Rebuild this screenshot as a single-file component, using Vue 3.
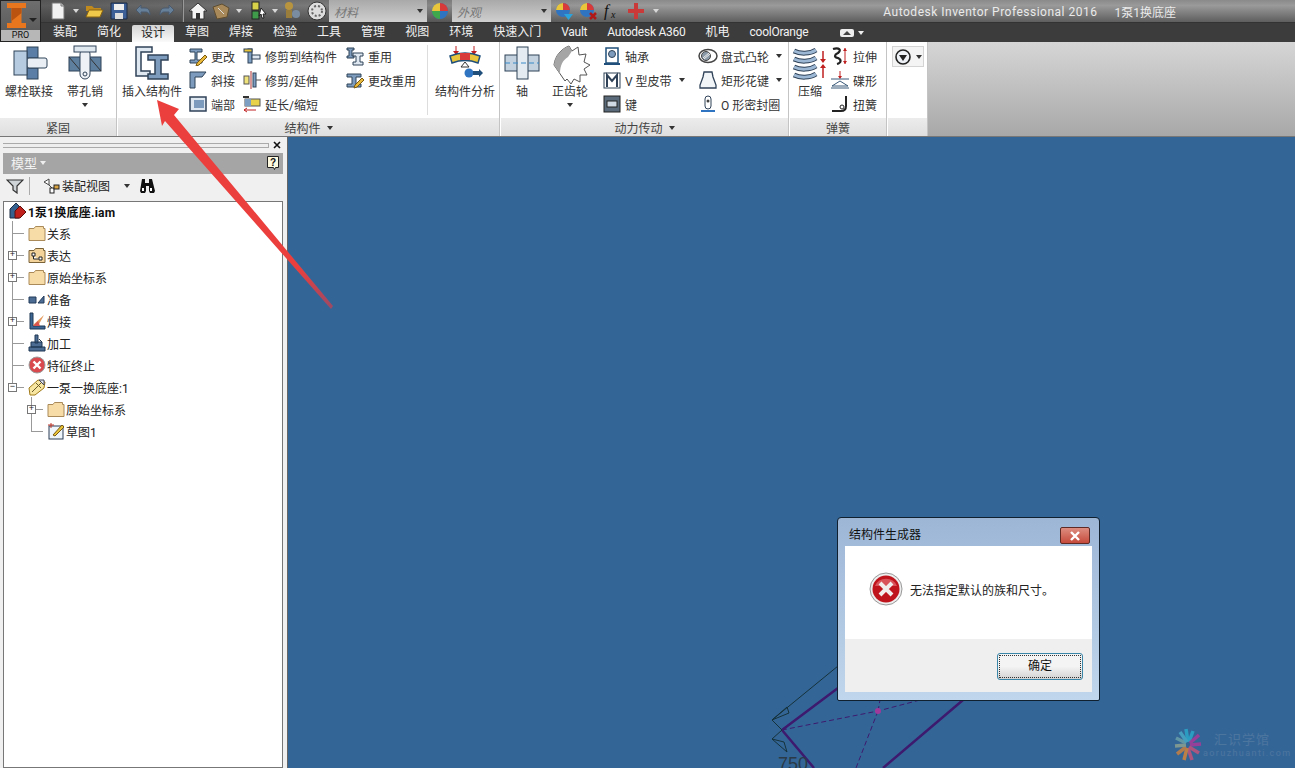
<template>
  <div class="app">
    <header class="head">
      <div class="logo">
        <svg width="19" height="25" viewBox="0 0 19 25">
          <path d="M0 0h19v5h-4.500v15H19v5H0v-5h4.500V5H0z" fill="#e8761e" />
          <path d="M4.500 5h10v5l-10 8z" fill="#b9530f" />
        </svg>
        <i class="caret logo-caret"></i>
        <span class="pro">PRO</span>
      </div>
      <div class="head-right">
        <div class="titlebar">
          <div class="qat">
            <span v-for="(q, i) in quick" :key="i" class="qat-item" :style="{ width: q.w + 'px' }">
              <i v-if="q.caret" class="caret small-caret"></i>
              <i v-else-if="q.sep" class="qat-sep"></i>
              <span v-else-if="q.combo" class="combo" :style="{ width: q.w + 'px' }">
                <em>{{ q.combo }}</em><i class="caret small-caret dark"></i>
              </span>
              <svg v-else width="20" height="20" viewBox="0 0 20 20" v-html="icons[q.icon]"></svg>
            </span>
          </div>
          <div class="title">
            <span class="title-app">Autodesk Inventor Professional 2016</span>
            <span>1泵1换底座</span>
          </div>
        </div>
        <nav class="tabs">
          <span
            v-for="t in tabs"
            :key="t"
            class="tab"
            :class="{ active: t === '设计', latin: /^[a-zA-Z0-9 ]+$/.test(t) }"
          >{{ t }}</span>
          <span class="tab-extra">
            <svg width="14" height="10" viewBox="0 0 14 10">
              <rect x="0" y="1" width="14" height="8" rx="2" fill="#eee" />
              <path d="M3 7l4-4 4 4z" fill="#444" />
            </svg>
            <i class="caret small-caret light"></i>
          </span>
        </nav>
      </div>
    </header>

    <section class="ribbon">
      <div v-for="p in panels" :key="p.title" class="panel" :style="{ width: p.w + 'px' }">
        <div class="panel-body" :style="{ paddingLeft: p.pad + 'px' }">
          <template v-for="(it, i) in p.items" :key="i">
            <div v-if="it.big" class="big" :style="{ width: it.w + 'px', marginLeft: (it.ml || 0) + 'px' }">
              <svg width="40" height="40" viewBox="0 0 40 40" v-html="icons[it.icon]"></svg>
              <span class="big-label">{{ it.big }}</span>
              <i v-if="it.caret" class="caret small-caret dark big-caret"></i>
            </div>
            <i v-else-if="it.sep" class="panel-sep" :style="{ marginRight: it.mr + 'px' }"></i>
            <div v-else class="small-col" :style="{ width: it.w + 'px', marginLeft: (it.ml || 0) + 'px' }">
              <div v-for="r in it.rows" :key="r.text" class="small">
                <svg class="small-icon" width="20" height="20" viewBox="0 0 20 20" v-html="icons[r.icon]"></svg>
                <span>{{ r.text }}</span>
                <i v-if="r.caret" class="caret small-caret dark small-drop"></i>
              </div>
            </div>
          </template>
          <div v-if="p.view" class="view-btn">
            <svg width="18" height="18" viewBox="0 0 18 18">
              <circle cx="9" cy="9" r="7" fill="#eef2f6" stroke="#222" stroke-width="1.6" />
              <path d="M5 7h8l-4 6z" fill="#222" />
            </svg>
            <i class="caret small-caret dark"></i>
          </div>
        </div>
        <div class="panel-foot">
          {{ p.title }}<i v-if="p.caret" class="caret small-caret dark foot-caret"></i>
        </div>
      </div>
      <div class="ribbon-fill"></div>
    </section>

    <main class="main">
      <aside class="browser">
        <div class="grip">
          <i></i>
          <svg width="8" height="8" viewBox="0 0 8 8"><path d="M1 1l6 6M7 1L1 7" stroke="#111" stroke-width="1.6" /></svg>
        </div>
        <div class="browser-head">
          <span>模型</span><i class="caret small-caret light"></i>
          <svg class="help" width="14" height="16" viewBox="0 0 14 16">
            <path d="M1.500 1.500h11v11h-3l-1 2-1-2h-6z" fill="#fffbe0" stroke="#222" />
            <text x="7" y="11" font-size="10" font-weight="700" text-anchor="middle" font-family="Liberation Sans, sans-serif" fill="#111">?</text>
          </svg>
        </div>
        <div class="browser-tools">
          <svg width="18" height="16" viewBox="0 0 18 16">
            <path d="M1 2h16l-6 6v7l-4-3V8z" fill="#cfd4d8" stroke="#333" stroke-width="1.200" />
          </svg>
          <i class="tool-sep"></i>
          <svg width="20" height="18" viewBox="0 0 20 18">
            <path d="M3 5l5-3v6zM8 8l3 3" stroke="#444" fill="#fff" />
            <rect x="9" y="11" width="4" height="5" fill="#fff" stroke="#222" />
            <rect x="13" y="8" width="5" height="4" fill="#d9a441" stroke="#222" />
          </svg>
          <span class="tool-label">装配视图</span>
          <i class="caret small-caret dark tool-caret"></i>
          <svg class="binoc" width="16" height="14" viewBox="0 0 16 14">
            <path d="M3 0h3v4h4V0h3l3 12-1 2h-4l-1-2V7H7v5l-1 2H2l-1-2z" fill="#111" />
            <rect x="3" y="9" width="2" height="3" fill="#fff" />
            <rect x="11" y="9" width="2" height="3" fill="#fff" />
          </svg>
        </div>
        <div class="tree">
          <div class="tree-root">
            <svg width="18" height="18" viewBox="0 0 18 18">
              <path d="M1 7l6-6 3 3v12H1z" fill="#36618f" stroke="#1c2d44" />
              <path d="M6 9l5-5 6 6-6 6H6z" fill="#c0201c" stroke="#5a0f0c" />
            </svg>
            <b>1泵1换底座.iam</b>
          </div>
          <div v-for="(n, i) in tree" :key="i" class="row" :class="{ nested: n.level === 2 }">
            <i class="line-v" :class="{ last: n.lastV }"></i>
            <i class="line-h"></i>
            <i v-if="n.level === 2" class="line-down" :class="{ last: n.lastV }"></i>
            <i v-if="n.toggle" class="toggle">{{ n.toggle }}</i>
            <svg width="18" height="18" viewBox="0 0 18 18" v-html="icons[n.icon]"></svg>
            <span>{{ n.text }}</span>
          </div>
        </div>
      </aside>

      <div class="viewport">
        <svg class="sketch" width="1008" height="631" viewBox="287 137 1008 631">
          <g stroke="#3d1a6e" stroke-width="2.500" fill="none">
            <path d="M782 730L838 688M782 730L814 768M963 700L883 768" />
          </g>
          <g stroke="#3d1a6e" stroke-width="1" stroke-dasharray="5 3" fill="none">
            <path d="M782 730L878 711L920 700M878 711L856 768M878 711L880 700" />
          </g>
          <circle cx="878" cy="711" r="3" fill="#a03a9a" />
          <g stroke="#15323a" stroke-width="1" fill="none">
            <path d="M838 666L772 720L787 707L789 713L772 720M782 730L772 720M782 730L772 739L787 752L784 742L772 739" />
          </g>
          <text x="778" y="770" font-size="18" fill="#2a3a46" font-family="Liberation Sans, sans-serif">750</text>
        </svg>

        <div class="dialog">
          <div class="dialog-title">
            <span>结构件生成器</span>
            <button class="dialog-close">
              <svg width="12" height="10" viewBox="0 0 12 10"><path d="M2 1l8 8M10 1L2 9" stroke="#fff" stroke-width="2.400" /></svg>
            </button>
          </div>
          <div class="dialog-body">
            <svg width="34" height="34" viewBox="0 0 34 34">
              <circle cx="17" cy="17" r="16" fill="#eee" stroke="#999" />
              <circle cx="17" cy="17" r="13.500" fill="#c0141c" />
              <path d="M6 14a12 12 0 0 1 22 0z" fill="#d9545a" />
              <path d="M11 11l12 12M23 11L11 23" stroke="#f1eded" stroke-width="4" />
            </svg>
            <span>无法指定默认的族和尺寸。</span>
          </div>
          <div class="dialog-foot">
            <button class="ok"><span>确定</span></button>
          </div>
        </div>

        <div class="watermark">
          <svg width="28" height="34" viewBox="0 0 28 34">
            <g stroke-width="3.500" fill="none" opacity=".85">
              <path d="M14 14L12 1" stroke="#2aa7c9" />
              <path d="M15 14L19 3" stroke="#2aa7c9" />
              <path d="M16 15L25 7" stroke="#a83a9a" />
              <path d="M16 17L27 16" stroke="#a83a9a" />
              <path d="M15 19L25 25" stroke="#c2537a" />
              <path d="M14 20L18 32" stroke="#c2537a" />
              <path d="M13 20L10 32" stroke="#d7843a" />
              <path d="M12 19L3 26" stroke="#c9803f" />
              <path d="M12 17L1 18" stroke="#8ba08f" />
              <path d="M12 15L2 10" stroke="#6aa0a8" />
              <path d="M13 14L6 4" stroke="#4aa9c6" />
            </g>
          </svg>
          <div>
            <p class="wm-cn">汇识学馆</p>
            <p class="wm-en">aoruzhuanti.com</p>
          </div>
        </div>
      </div>
    </main>

    <svg class="arrow" width="200" height="220" viewBox="140 95 200 220">
      <defs>
        <linearGradient id="arrowFill" x1="0" y1="0" x2="1" y2="1">
          <stop offset="0.8" stop-color="#ea3f3d" />
          <stop offset="1" stop-color="#9a4a66" />
        </linearGradient>
      </defs>
      <path d="M157 100L179 109L174 115L333 306L331 309L165 121L162 126z" fill="url(#arrowFill)" />
    </svg>
  </div>
</template>

<script setup>
const blue = "#7f9fc2";
const dark = "#2f4258";

const icons = {
  doc: '<path d="M4 2h9l3 3v13H4z" fill="#f2f2f2" stroke="#777"/><path d="M13 2v3h3" fill="#ccc" stroke="#777"/>',
  open: '<path d="M2 5h6l2 2h7v3H2z" fill="#c08a1c"/><path d="M2 16l3-7h14l-3 7z" fill="#f0c84a" stroke="#8a6410"/>',
  save: '<path d="M2 2h16v16H2z" fill="#3b5f96" stroke="#1a2a44"/><rect x="5" y="3" width="10" height="6" fill="#eee"/><rect x="6" y="12" width="8" height="6" fill="#ddd"/>',
  undo: '<path d="M3 9l5-5v3h4c4 0 5 3 5 7-2-3-3-3-5-3H8v3z" fill="#67809a" stroke="#4a5a6c"/>',
  redo: '<path d="M17 9l-5-5v3H8c-4 0-5 3-5 7 2-3 3-3 5-3h4v3z" fill="#67809a" stroke="#4a5a6c"/>',
  home: '<path d="M1 10l9-8 9 8h-3v8H4v-8z" fill="#f4f4f4" stroke="#333"/><rect x="8" y="12" width="4" height="6" fill="#333"/>',
  box: '<path d="M2 6l9-3 7 4-2 9-10 2z" fill="#a88a5a" stroke="#5f4d30"/><path d="M7 7l6 6" stroke="#ddd"/>',
  parts: '<rect x="5" y="1" width="7" height="8" fill="#d8d24a" stroke="#222"/><rect x="5" y="10" width="7" height="8" fill="#3f9a4a" stroke="#222"/><path d="M14 7l5 6-3 0 1 4-2 0-1-4-2 2z" fill="#fff" stroke="#222"/>',
  people: '<circle cx="7" cy="5" r="4" fill="#b8943e"/><rect x="4" y="9" width="6" height="8" fill="#9a7d3a"/><circle cx="14" cy="13" r="4" fill="#7a8da0"/>',
  disc: '<circle cx="10" cy="10" r="9" fill="#ddd" stroke="#333"/><circle cx="10" cy="10" r="5" fill="none" stroke="#666" stroke-width="2" stroke-dasharray="2 2"/>',
  ball: '<circle cx="10" cy="10" r="8" fill="#2f74c0"/><path d="M10 2a8 8 0 0 1 8 8h-8z" fill="#d83a3a"/><path d="M2 10a8 8 0 0 1 8-8v8z" fill="#e8c53a"/><path d="M2 10h8v8a8 8 0 0 1-8-8z" fill="#3fa84a"/>',
  ballDown: '<circle cx="9" cy="9" r="7" fill="#2f74c0"/><path d="M9 2a7 7 0 0 1 7 7H9z" fill="#d83a3a"/><path d="M2 9a7 7 0 0 1 7-7v7z" fill="#e8c53a"/><path d="M10 13h9l-4.500 6z" fill="#2aa3dc"/>',
  ballX: '<circle cx="9" cy="9" r="7" fill="#2f74c0"/><path d="M9 2a7 7 0 0 1 7 7H9z" fill="#d83a3a"/><path d="M2 9a7 7 0 0 1 7-7v7z" fill="#e8c53a"/><path d="M12 12l6 6M18 12l-6 6" stroke="#b01818" stroke-width="2.500"/>',
  fx: '<text x="2" y="15" font-family="Liberation Serif, serif" font-style="italic" font-size="16" fill="#111">f</text><text x="9" y="17" font-family="Liberation Serif, serif" font-style="italic" font-size="10" fill="#111">x</text>',
  plus: '<path d="M8 2h4v6h6v4h-6v6H8v-6H2V8h6z" fill="#c93a38"/>',
  bolt: `<rect x="18" y="2" width="11" height="11" fill="#5a7ea6" stroke="${dark}"/><rect x="18" y="23" width="11" height="11" fill="#5a7ea6" stroke="${dark}"/><rect x="18" y="13" width="20" height="10" rx="2" fill="#e8eef4" stroke="${dark}"/><rect x="5" y="6" width="13" height="24" fill="#b6cbe0" stroke="${dark}"/>`,
  pin: `<rect x="4" y="12" width="32" height="14" fill="#5f7f9f" stroke="${dark}"/><path d="M4 12l12 14M24 12l12 14" stroke="#333"/><rect x="15" y="4" width="10" height="30" rx="5" fill="#eef2f6" stroke="${dark}"/><rect x="9" y="1" width="22" height="6" fill="#dfe7ef" stroke="${dark}"/><circle cx="20" cy="29" r="2" fill="none" stroke="${dark}"/>`,
  insert: `<path d="M4 2h16v5h-11v19h9v5H4z" fill="#dfe8f1" stroke="${dark}" stroke-width="1.500"/><path d="M16 10h20v5h-7v14h7v5H16v-5h7V15h-7z" fill="#7d9cbd" stroke="${dark}" stroke-width="1.500"/>`,
  change: `<path d="M2 3h12v3H9v8h5v3H2v-3h5V6H2z" fill="#7d9cbd" stroke="${dark}"/><path d="M9 17l8-8 2 2-8 8-3 1z" fill="#e8b93a" stroke="#7a5a10"/>`,
  miter: `<path d="M2 2h16l-4 5H7v11H2z" fill="#7d9cbd" stroke="${dark}"/>`,
  end: `<rect x="2" y="3" width="16" height="14" fill="#dfe8f1" stroke="${dark}" stroke-width="1.500"/><path d="M6 6h10v8H6z" fill="#7d9cbd"/>`,
  trimTo: `<rect x="6" y="3" width="4" height="14" fill="${blue}" stroke="${dark}"/><rect x="2" y="3" width="8" height="3" fill="#e8c53a" stroke="${dark}"/><rect x="10" y="9" width="8" height="4" fill="#dfe8f1" stroke="${dark}"/>`,
  trimExt: `<rect x="2" y="6" width="5" height="8" fill="#f0e27a" stroke="#555"/><path d="M9 1v18" stroke="#b03030"/><rect x="11" y="3" width="3" height="14" fill="${blue}" stroke="${dark}"/><path d="M14 10h5" stroke="#555"/>`,
  lengthen: `<rect x="1" y="2" width="6" height="2" fill="#333"/><rect x="3" y="5" width="15" height="7" fill="#e8d24a" stroke="#555"/><rect x="3" y="5" width="6" height="7" fill="${blue}"/><path d="M2 16h12M2 16l3-2M2 16l3 2" stroke="#c02020" fill="none"/>`,
  reuse: `<path d="M2 2h7v2H7v6h2v2H2v-2h2V4H2z" fill="#7d9cbd" stroke="${dark}"/><path d="M8 7h10v3h-3v6h3v3H8v-3h3v-6H8z" fill="#dfe8f1" stroke="${dark}"/>`,
  reuseChange: `<path d="M2 4h14v3h-5v7h5v3H2v-3h5V7H2z" fill="#7d9cbd" stroke="${dark}"/><path d="M10 15l7-7 2 2-7 7-3 1z" fill="#e8b93a" stroke="#7a5a10"/>`,
  analysis: `<path d="M11 1v8M29 1v8" stroke="#c02020"/><path d="M8 6h6l-3 4zM26 6h6l-3 4z" fill="#c02020"/><path d="M5 11c10-4 20-4 30 0l-2 7c-8-3-18-3-26 0z" fill="#e8c53a" stroke="#1f4f7a" stroke-width="1.500"/><path d="M15 8h10v7H15z" fill="#d83a3a"/><path d="M20 17l-4 5h8z" fill="#fff" stroke="#333"/><circle cx="24" cy="28" r="4.500" fill="#2f74c0"/><path d="M28 26h6v-2l4 4-4 4v-2h-6z" fill="#1f4f7a"/>`,
  shaft: `<rect x="3" y="10" width="34" height="16" fill="#c4d2df" stroke="${dark}"/><rect x="15" y="2" width="11" height="32" fill="#e4ebf1" stroke="${dark}"/><path d="M3 18h34" stroke="#3a8ac8" stroke-dasharray="5 3"/>`,
  gear: '<path d="M4 20C5 11 11 4 19 1l3 5 6-4 1 8 7-1-2 8 6 3-6 4 3 6-7 0 0 7-6-3-3 5-4-5-2 2z" fill="#fff" stroke="#555"/><path d="M4 20C5 11 11 4 19 1l3 5-4 6c-5 3-8 8-8 17z" fill="#a5a5a5"/>',
  bearing: `<rect x="4" y="2" width="12" height="15" fill="#fff" stroke="#1f4f7a" stroke-width="1.500"/><circle cx="10" cy="8" r="3.500" fill="#7d9cbd" stroke="${dark}"/><path d="M2 18h16" stroke="#1f4f7a" stroke-width="2"/>`,
  belt: `<rect x="2" y="3" width="16" height="15" fill="#fff" stroke="${dark}"/><path d="M5 17V5l5 6 5-6v12" fill="none" stroke="${dark}" stroke-width="2"/>`,
  key: `<rect x="2" y="2" width="16" height="16" fill="#5a6a7a" stroke="#222"/><rect x="5" y="7" width="10" height="6" fill="#cfd9e3" stroke="#222"/>`,
  cam: `<ellipse cx="10" cy="10" rx="9" ry="6.500" fill="#fff" stroke="#444" stroke-width="1.500"/><circle cx="8" cy="10" r="4.500" fill="#8a9aa8" stroke="#444"/><path d="M5 12l6-5M6 13l6-5" stroke="#eee"/>`,
  spline: `<path d="M6 2h8l1 5 3 8v3H2v-3l3-8z" fill="#f2f5f8" stroke="${dark}" stroke-width="1.300"/>`,
  oring: `<rect x="7" y="2" width="6" height="13" rx="3" fill="#fff" stroke="${dark}"/><circle cx="10" cy="7" r="1.500" fill="#444"/><path d="M3 17h14" stroke="#2f74c0" stroke-width="2"/>`,
  spring: `<g fill="none" stroke="${dark}" stroke-width="5"><path d="M4 6c6 3 16 3 22-1M4 14c6 3 16 3 22-1M4 22c6 3 16 3 22-1M4 30c6 3 16 3 22-1"/></g><g fill="none" stroke="#9db8d4" stroke-width="3"><path d="M4 6c6 3 16 3 22-1M4 14c6 3 16 3 22-1M4 22c6 3 16 3 22-1M4 30c6 3 16 3 22-1"/></g><path d="M33 6v10M33 33V22" stroke="#c02020" stroke-width="1.500"/><path d="M30 14h6l-3 4zM30 23h6l-3-4z" fill="#c02020"/>`,
  tension: `<path d="M3 3c6-2 9 1 5 4-4 2-4 4 0 5 4 2 3 5-1 6" fill="none" stroke="#222" stroke-width="2.200"/><path d="M15 2v16" stroke="#c02020"/><path d="M13 5l2-3 2 3zM13 15l2 3 2-3z" fill="#c02020"/>`,
  disk: `<path d="M10 1v7" stroke="#c02020"/><path d="M8 6h4l-2 3z" fill="#c02020"/><path d="M1 9h18M10 11l8 5H2zM1 18h18" stroke="#3a5a7a" fill="none"/>`,
  torsion: `<path d="M2 17h9c4 0 5-2 5-5V2" fill="none" stroke="#222" stroke-width="2"/><circle cx="12" cy="13" r="2" fill="none" stroke="#222"/>`,
  folder: '<path d="M1 4.500h5l1.500-2h8v2h1.500v12H1z" fill="#f8dca8" stroke="#a98a58"/>',
  repr: '<path d="M1 4.500h5l1.500-2h8v2h1.500v12H1z" fill="#f3d39a" stroke="#7a6238"/><path d="M4 7h3v3H4zM11 11h3v3h-3zM5.500 10v3h5" fill="#fff" stroke="#222"/>',
  datum: '<path d="M1 7h7v6H1zM10 13l6-7v7z" fill="#4c6c94" stroke="#223a58"/>',
  weld: '<path d="M2 1h3v13h12v3H2z" fill="#3d6694" stroke="#1f3652"/><path d="M5 13l11-10-6 11z" fill="#e59a5c"/><path d="M5 14l5-5 2 5z" fill="#d9534f"/>',
  machine: '<path d="M7 1h3v8H7zM3 8h11v5H3zM1 13h16v4H1z" fill="#4c6c94" stroke="#1f3652"/><path d="M11 5l3 3" stroke="#1f3652"/>',
  stop: '<circle cx="9" cy="9" r="8" fill="#d94a4e" stroke="#9c9c9c"/><path d="M5.500 5.500l7 7M12.500 5.500l-7 7" stroke="#fff" stroke-width="2.400"/>',
  part: '<path d="M1 10l9-8 7 2-1 6-9 7H2z" fill="#f7e6a2" stroke="#a07a18"/><path d="M4 14L14 4M8 5l5 5" stroke="#6a5a2a"/><path d="M11 2l5 0 0 5z" fill="#dde6ef" stroke="#445"/>',
  sketch: '<rect x="2" y="4" width="14" height="13" fill="#eef5fb" stroke="#2a3d55"/><path d="M6 13l9-10 2 2-9 9z" fill="#e8c53a" stroke="#7a5a10"/><path d="M1 3h6M4 1v5" stroke="#c0392b"/>',
};

const quick = [
  { icon: "doc", w: 24 }, { caret: true, w: 12 }, { icon: "open", w: 24 }, { icon: "save", w: 25 },
  { icon: "undo", w: 24 }, { icon: "redo", w: 23 }, { sep: true, w: 9 }, { icon: "home", w: 22 },
  { icon: "box", w: 24 }, { caret: true, w: 12 }, { icon: "parts", w: 24 }, { caret: true, w: 11 },
  { icon: "people", w: 24 }, { icon: "disc", w: 25 }, { combo: "材料", w: 98 }, { icon: "ball", w: 25 },
  { combo: "外观", w: 99 }, { icon: "ballDown", w: 25 }, { icon: "ballX", w: 24 }, { icon: "fx", w: 24 },
  { icon: "plus", w: 24 }, { caret: true, w: 16 },
];

const tabs = [
  "装配", "简化", "设计", "草图", "焊接", "检验", "工具", "管理", "视图", "环境",
  "快速入门", "Vault", "Autodesk A360", "机电", "coolOrange",
];

const panels = [
  {
    title: "紧固", w: 116, pad: 5,
    items: [
      { big: "螺栓联接", icon: "bolt", w: 48 },
      { big: "帯孔销", icon: "pin", w: 36, ml: 14, caret: true },
    ],
  },
  {
    title: "结构件", w: 381, pad: 4, caret: true,
    items: [
      { big: "插入结构件", icon: "insert", w: 60 },
      {
        w: 54, ml: 8,
        rows: [
          { icon: "change", text: "更改" },
          { icon: "miter", text: "斜接" },
          { icon: "end", text: "端部" },
        ],
      },
      {
        w: 103,
        rows: [
          { icon: "trimTo", text: "修剪到结构件" },
          { icon: "trimExt", text: "修剪/延伸" },
          { icon: "lengthen", text: "延长/缩短" },
        ],
      },
      {
        w: 80,
        rows: [
          { icon: "reuse", text: "重用" },
          { icon: "reuseChange", text: "更改重用" },
        ],
      },
      { sep: true, mr: 7 },
      { big: "结构件分析", icon: "analysis", w: 60 },
    ],
  },
  {
    title: "动力传动", w: 287, pad: 3, caret: true,
    items: [
      { big: "轴", icon: "shaft", w: 36 },
      { big: "正齿轮", icon: "gear", w: 36, ml: 12, caret: true },
      {
        w: 96, ml: 16,
        rows: [
          { icon: "bearing", text: "轴承" },
          { icon: "belt", text: "V 型皮带", caret: true },
          { icon: "key", text: "键" },
        ],
      },
      {
        w: 90,
        rows: [
          { icon: "cam", text: "盘式凸轮", caret: true },
          { icon: "spline", text: "矩形花键", caret: true },
          { icon: "oring", text: "O 形密封圈" },
        ],
      },
    ],
  },
  {
    title: "弹簧", w: 96, pad: 2,
    items: [
      { big: "压缩", icon: "spring", w: 36 },
      {
        w: 50, ml: 4,
        rows: [
          { icon: "tension", text: "拉伸" },
          { icon: "disk", text: "碟形" },
          { icon: "torsion", text: "扭簧" },
        ],
      },
    ],
  },
  { title: "", w: 39, pad: 3, view: true, items: [] },
];

const tree = [
  { text: "关系", icon: "folder", level: 1 },
  { text: "表达", icon: "repr", level: 1, toggle: "+" },
  { text: "原始坐标系", icon: "folder", level: 1, toggle: "+" },
  { text: "准备", icon: "datum", level: 1 },
  { text: "焊接", icon: "weld", level: 1, toggle: "+" },
  { text: "加工", icon: "machine", level: 1 },
  { text: "特征终止", icon: "stop", level: 1 },
  { text: "一泵一换底座:1", icon: "part", level: 1, toggle: "−", lastV: true },
  { text: "原始坐标系", icon: "folder", level: 2, toggle: "+" },
  { text: "草图1", icon: "sketch", level: 2, lastV: true },
];
</script>

<style scoped>
.app {
  position: relative;
  width: 1295px;
  height: 768px;
  overflow: hidden;
  display: flex;
  flex-direction: column;
  font-family: Roboto, "Noto Sans CJK SC", sans-serif;
  font-size: 12px;
  color: #222;
  background: #f0f0f0;
}
i {
  font-style: normal;
  display: block;
  flex: none;
}
.caret {
  width: 0;
  height: 0;
  border-style: solid;
  border-color: #d8d8d8 transparent transparent;
}
.small-caret {
  border-width: 4px 3px 0;
}
.small-caret.dark {
  border-top-color: #333;
}
.small-caret.light {
  border-top-color: #eee;
}

/* top bar */
.head {
  display: flex;
  height: 42px;
  background: #3c3c3c;
}
.logo {
  position: relative;
  width: 41px;
  flex: none;
  background: linear-gradient(#6e6e6e, #555);
  border: 1px solid #222;
  box-sizing: border-box;
  padding: 2px 0 0 6px;
}
.logo-caret {
  position: absolute;
  top: 17px;
  right: 3px;
  border-width: 4px 4px 0;
  border-top-color: #222;
}
.pro {
  position: absolute;
  left: 0;
  right: 0;
  bottom: 0;
  height: 11px;
  line-height: 11px;
  font-size: 9px;
  text-align: center;
  color: #111;
  background: #b7b7b7;
}
.head-right {
  flex: 1;
  display: flex;
  flex-direction: column;
  min-width: 0;
}
.titlebar {
  height: 23px;
  display: flex;
  justify-content: space-between;
  background:
    linear-gradient(90deg, rgba(40, 40, 40, 0.55), transparent 45%),
    linear-gradient(#8a8a8a, #9a9a9a 25%, #5e5e5e);
  border-bottom: 1px solid #333;
  box-sizing: border-box;
}
.qat {
  display: flex;
  align-items: center;
  padding-left: 5px;
}
.qat-item {
  display: flex;
  align-items: center;
  justify-content: center;
  height: 22px;
  flex: none;
}
.qat-sep {
  width: 1px;
  height: 22px;
  background: #555;
  border-right: 1px solid #999;
}
.combo {
  box-sizing: border-box;
  height: 22px;
  padding: 0 4px 0 5px;
  display: flex;
  align-items: center;
  justify-content: space-between;
  background: linear-gradient(#a9a9a9, #cfcfcf);
}
.combo em {
  color: #777;
  font-size: 12px;
}
.title {
  display: flex;
  gap: 17px;
  padding: 1px 119px 0 0;
  align-items: center;
  color: #eaeaea;
  height: 22px;
  box-sizing: border-box;
}
.title-app {
  letter-spacing: 0.5px;
}
.tabs {
  flex: 1;
  display: flex;
  align-items: stretch;
  padding-left: 2px;
  color: #f2f2f2;
}
.tab {
  padding: 0 10px;
  line-height: 19px;
}
.tab.latin {
  letter-spacing: -0.25px;
}
.tab.active {
  color: #222;
  background: linear-gradient(#d4d4d4, #fafafa);
  margin: 2px 1px 0;
  padding: 0 9px;
  line-height: 17px;
  border-radius: 2px 2px 0 0;
}
.tab-extra {
  display: flex;
  align-items: center;
  gap: 4px;
  margin-left: 22px;
}

/* ribbon */
.ribbon {
  height: 95px;
  display: flex;
  flex: none;
  background: #fff;
  border-bottom: 1px solid #777;
  box-sizing: border-box;
}
.panel {
  flex: none;
  display: flex;
  flex-direction: column;
  border-right: 1px solid #c4c4c4;
  margin-right: 1px;
}
.panel-body {
  flex: 1;
  display: flex;
  padding-top: 3px;
  min-height: 0;
  background: #fff;
}
.panel-foot {
  height: 18px;
  box-sizing: border-box;
  flex: none;
  display: flex;
  align-items: center;
  justify-content: center;
  gap: 6px;
  color: #444;
  background: linear-gradient(#ececec, #dfdfdf);
}
.foot-caret {
  margin-top: 1px;
}
.big {
  flex: none;
  display: flex;
  flex-direction: column;
  align-items: center;
}
.big-label {
  margin-top: -2px;
  white-space: nowrap;
  line-height: 18px;
  color: #333;
}
.big-caret {
  margin-top: 2px;
}
.panel-sep {
  width: 1px;
  height: 70px;
  background: #ddd;
}
.small-col {
  flex: none;
  display: flex;
  flex-direction: column;
  margin-top: -1px;
}
.small {
  height: 24px;
  display: flex;
  align-items: center;
  white-space: nowrap;
  color: #333;
}
.small-icon {
  margin: 0 3px 0 -2px;
  flex: none;
}
.small-drop {
  margin-left: 7px;
}
.view-btn {
  width: 32px;
  height: 21px;
  margin: 1px 0 0 1px;
  box-sizing: border-box;
  border: 1px solid #d4d4d4;
  background: #f4f4f4;
  display: flex;
  align-items: center;
  justify-content: center;
  gap: 4px;
}
.ribbon-fill {
  flex: 1;
  background: linear-gradient(#d6d6d6, #a8a8a8);
  margin-left: -1px;
}

/* main area */
.main {
  flex: 1;
  display: flex;
  min-height: 0;
}
.browser {
  width: 288px;
  flex: none;
  box-sizing: border-box;
  padding: 0 4px 0 3px;
  display: flex;
  flex-direction: column;
  background: #f0f0f0;
  border-right: 1px solid #666;
}
.grip {
  height: 16px;
  display: flex;
  align-items: center;
  gap: 4px;
  padding-right: 2px;
}
.grip i {
  flex: 1;
  height: 3px;
  border: 1px solid #aaa;
  border-left: 0;
  background: #eee;
}
.browser-head {
  height: 21px;
  box-sizing: border-box;
  padding: 0 0 2px 8px;
  display: flex;
  align-items: center;
  gap: 3px;
  background: #a5a5a5;
  color: #f2f2f2;
  font-size: 13px;
}
.help {
  margin-left: auto;
  margin-right: 3px;
}
.browser-tools {
  height: 27px;
  box-sizing: border-box;
  padding: 0 0 4px 3px;
  display: flex;
  align-items: center;
}
.tool-sep {
  width: 1px;
  height: 18px;
  background: #aaa;
  margin: 0 11px 0 5px;
}
.tool-label {
  margin-left: 1px;
}
.tool-caret {
  margin-left: 14px;
}
.binoc {
  margin-left: 9px;
}
.tree {
  flex: 1;
  background: #fff;
  border: 1px solid #777;
}
.tree-root {
  height: 22px;
  margin-top: -2px;
  display: flex;
  align-items: center;
  gap: 1px;
  padding-left: 5px;
  color: #111;
}
.tree-root b {
  letter-spacing: 0.2px;
}
.row {
  position: relative;
  height: 22px;
  display: flex;
  align-items: center;
  gap: 1px;
  padding-left: 24px;
}
.row.nested {
  padding-left: 43px;
}
.line-v {
  position: absolute;
  left: 8px;
  top: -1px;
  height: 23px;
  width: 1px;
  background: #999;
}
.line-v.last {
  height: 12px;
}
.row.nested .line-v {
  display: none;
}
.line-h {
  position: absolute;
  left: 8px;
  top: 11px;
  width: 12px;
  height: 1px;
  background: #999;
}
.row.nested .line-h {
  left: 27px;
}
.line-down {
  position: absolute;
  left: 27px;
  top: -1px;
  width: 1px;
  height: 23px;
  background: #999;
}
.line-down.last {
  height: 12px;
}
.toggle {
  position: absolute;
  left: 4px;
  top: 7px;
  width: 7px;
  height: 7px;
  line-height: 6px;
  font-size: 9px;
  text-align: center;
  background: #fff;
  border: 1px solid #777;
  font-family: "Liberation Mono", monospace;
}
.row.nested .toggle {
  left: 23px;
}

/* viewport */
.viewport {
  position: relative;
  flex: 1;
  background: #346597;
  overflow: hidden;
}
.sketch {
  position: absolute;
  left: -1px;
  top: 0;
}
.dialog {
  position: absolute;
  left: 549px;
  top: 380px;
  width: 263px;
  height: 184px;
  box-sizing: border-box;
  padding: 0 7px 8px;
  display: flex;
  flex-direction: column;
  background: linear-gradient(#9db6d6, #c0d6ec);
  border: 1px solid #10202e;
  border-radius: 4px 4px 2px 2px;
}
.dialog-title {
  height: 28px;
  flex: none;
  display: flex;
  justify-content: space-between;
  align-items: flex-start;
  padding: 0 2px 0 4px;
}
.dialog-title span {
  line-height: 35px;
  color: #111;
}
.dialog-close {
  width: 30px;
  height: 17px;
  margin-top: 9px;
  padding: 0;
  display: flex;
  align-items: center;
  justify-content: center;
  background: linear-gradient(#dd8d80, #c64b3c);
  border: 1px solid #5f2a24;
  border-radius: 2px;
}
.dialog-body {
  flex: 1;
  display: flex;
  align-items: center;
  gap: 7px;
  padding: 0 0 7px 24px;
  background: #fff;
  color: #222;
}
.dialog-foot {
  height: 53px;
  flex: none;
  display: flex;
  justify-content: flex-end;
  align-items: flex-start;
  padding: 14px 9px 0 0;
  box-sizing: border-box;
  background: #efefef;
}
.ok {
  width: 86px;
  height: 27px;
  padding: 1px;
  border: 1px solid #3a86a8;
  border-radius: 3px;
  background: linear-gradient(#f4f4f4 50%, #d2d2d2);
  font: inherit;
  color: #111;
}
.ok span {
  display: block;
  height: 21px;
  line-height: 21px;
  border: 1px dotted #333;
}
.watermark {
  position: absolute;
  left: 886px;
  top: 591px;
  display: flex;
  align-items: center;
  gap: 1px;
}
.watermark p {
  margin: 0;
  color: #4d769f;
  line-height: 1;
}
.wm-cn {
  font-size: 13px;
  letter-spacing: 1px;
  padding-left: 11px;
}
.watermark .wm-en {
  margin-top: 3px;
  font-size: 9px;
  letter-spacing: 1.4px;
}
.arrow {
  position: absolute;
  left: 140px;
  top: 95px;
}
</style>

<style>
html, body {
  margin: 0;
  overflow: hidden;
}
</style>
